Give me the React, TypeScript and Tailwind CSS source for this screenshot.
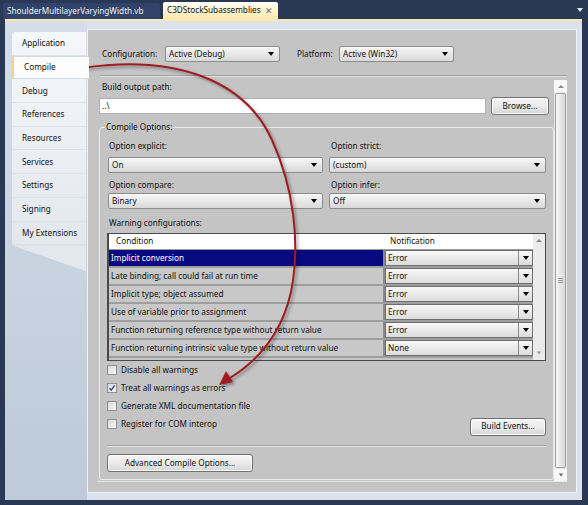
import React from 'react';

const Tri: React.FC<{ className?: string }> = ({ className = 'border-t-black' }) => (
  <span className={`inline-block w-0 h-0 border-x-[3.5px] border-t-[4px] border-x-transparent ${className}`} />
);

const UpTri: React.FC = () => (
  <span className="inline-block w-0 h-0 border-x-[3px] border-b-[3px] border-x-transparent border-b-[#8a8a8a]" />
);

const Combo: React.FC<{ value: string; className?: string }> = ({ value, className = '' }) => (
  <div
    className={`h-[16px] flex items-center rounded-[2px] border border-[#8c8c8c] bg-gradient-to-b from-[#f7f7f7] to-[#d9d9d9] pl-[3px] pr-[5px] ${className}`}
  >
    <span className="flex-1 truncate leading-[14px]">{value}</span>
    <Tri />
  </div>
);

const Btn: React.FC<{ label: string; className?: string }> = ({ label, className = '' }) => (
  <div
    className={`h-[18px] flex items-center justify-center rounded-[3px] border border-[#707070] bg-gradient-to-b from-[#f5f5f5] via-[#ebebeb] to-[#d6d6d6] shadow-[inset_0_0_0_1px_#fbfbfb] ${className}`}
  >
    {label}
  </div>
);

const Check: React.FC<{ label: string; checked?: boolean }> = ({ label, checked }) => (
  <div className="h-[18px] flex items-center">
    <span className="w-[10px] h-[10px] border border-[#8f8f8f] bg-gradient-to-br from-[#d8d8d8] to-[#f7f7f7] flex items-center justify-center">
      {checked && (
        <svg width="8" height="8" viewBox="0 0 8 8">
          <path d="M1.5 4.2 L3.2 6.2 L6.6 1.4" stroke="#2a3f8f" strokeWidth="1.3" fill="none" />
        </svg>
      )}
    </span>
    <span className="ml-[4px]">{label}</span>
  </div>
);

const pages = [
  'Application',
  'Compile',
  'Debug',
  'References',
  'Resources',
  'Services',
  'Settings',
  'Signing',
  'My Extensions',
];

const warnings: [string, string][] = [
  ['Implicit conversion', 'Error'],
  ['Late binding; call could fail at run time', 'Error'],
  ['Implicit type; object assumed', 'Error'],
  ['Use of variable prior to assignment', 'Error'],
  ['Function returning reference type without return value', 'Error'],
  ['Function returning intrinsic value type without return value', 'None'],
];

export default function App() {
  return (
    <div className="relative w-[588px] h-[505px] overflow-hidden bg-[#293955] flex flex-col font-['Noto_Sans',sans-serif] text-[8.2px] leading-none text-[#111]">
      {/* document tabs */}
      <div className="h-[19px] shrink-0 flex items-end pl-[3px]">
        <div className="h-[16px] w-[157px] pl-[4px] flex items-center bg-[#31436a] text-[#eef2f8] rounded-t-[2px]">
          ShoulderMultilayerVaryingWidth.vb
        </div>
        <div className="ml-[3px] h-[17px] w-[115px] pl-[4px] pr-[5px] flex items-center justify-between rounded-t-[2px] bg-gradient-to-b from-[#fffef6] to-[#fde9ad]">
          <span>C3DStockSubassemblies</span>
          <span className="text-[#6a6a6a] text-[9px]">✕</span>
        </div>
        <div className="flex-1" />
        <span className="mr-[5px] mb-[6px]">
          <Tri className="border-t-[#dfe6f0]" />
        </span>
      </div>

      {/* document window */}
      <div className="flex-1 ml-[5px] mr-[6px] mb-[5px] border-t-2 border-[#fde9ad] bg-[#dce2eb] flex pr-[6px]">
        {/* side tabs */}
        <div className="w-[82px] shrink-0 pt-[11px] pl-[7px] bg-gradient-to-b from-[#d5dde8] to-[#bccad9]">
          <div className="w-[74px] rounded-tl-[3px] bg-gradient-to-b from-[#f5f7fa] to-[#e3e8ee] flex flex-col">
            {pages.map((p) =>
              p === 'Compile' ? (
                <div
                  key={p}
                  className="relative z-10 h-[23.7px] w-[77px] pl-[10px] flex items-center bg-[#fcfcfd] border-y border-[#d3d9e1] border-l-2 border-l-[#f1d48c]"
                >
                  {p}
                </div>
              ) : (
                <div key={p} className="h-[23.7px] pl-[10px] flex items-center border-b border-[#dde2e9]">
                  {p}
                </div>
              )
            )}
          </div>
          <div className="w-[74px] h-[26px] bg-[#e3e8ee] [clip-path:polygon(0_0,100%_0,100%_100%)]" />
        </div>

        {/* property page */}
        <div className="flex-1 mt-[8px] mb-[7px] bg-[#c4c4c4] border border-[#eef1f5] px-[9px] flex flex-col">
          <div className="mt-[16px] h-[16px] pl-[5px] flex items-center">
            <span className="w-[63px]">Configuration:</span>
            <Combo value="Active (Debug)" className="w-[115px]" />
            <span className="w-[17px]" />
            <span className="w-[42px]">Platform:</span>
            <Combo value="Active (Win32)" className="w-[115px]" />
          </div>
          <div className="mt-[13px] ml-[3px] h-[2px] border-t border-[#a0a0a0] border-b border-b-[#e2e2e2]" />

          {/* scroll viewport */}
          <div className="mt-[3px] h-[402px] flex border-b border-[#e6e6e6]">
            <div className="flex-1 flex flex-col">
              <div className="mt-[1px] h-[12px] pl-[5px] flex items-center">Build output path:</div>
              <div className="mt-[4px] h-[18px] pl-[2px] flex items-center">
                <div className="w-[387px] h-[16px] pl-[2px] flex items-center bg-white border border-[#b0b0b0]">..\</div>
                <Btn label="Browse..." className="ml-[5px] w-[58px]" />
              </div>

              <fieldset className="mt-[6px] ml-[2px] w-[452px] border border-[#ececec] rounded-[3px] px-[7px] pb-[7px]">
                <legend className="ml-[-2px] px-[1px] h-[12px] leading-[12px]">Compile Options:</legend>

                <div className="mt-[7px] flex">
                  <div className="w-[216px] pl-[2px] h-[12px] flex items-center">Option explicit:</div>
                  <div className="ml-[6px] pl-[2px] h-[12px] flex items-center">Option strict:</div>
                </div>
                <div className="mt-[5px] pl-[1px] flex gap-[6px]">
                  <Combo value="On" className="w-[215px]" />
                  <Combo value="(custom)" className="w-[217px]" />
                </div>
                <div className="mt-[6px] flex">
                  <div className="w-[216px] pl-[2px] h-[12px] flex items-center">Option compare:</div>
                  <div className="ml-[6px] pl-[2px] h-[12px] flex items-center">Option infer:</div>
                </div>
                <div className="mt-[2px] pl-[1px] flex gap-[6px]">
                  <Combo value="Binary" className="w-[215px]" />
                  <Combo value="Off" className="w-[217px]" />
                </div>
                <div className="mt-[8px] pl-[2px] h-[12px] flex items-center">Warning configurations:</div>

                {/* warnings grid */}
                <div className="mt-[4px] w-[439px] h-[128px] border border-[#4a4a4a] border-l-2 flex bg-[#c6c6c6]">
                  <div className="flex-1 flex flex-col">
                    <div className="h-[16px] flex items-center bg-white border-b border-[#9a9a9a]">
                      <span className="w-[276px] pl-[7px]">Condition</span>
                      <span className="pl-[5px]">Notification</span>
                    </div>
                    {warnings.map(([cond, note], i) => (
                      <div key={cond} className="h-[18px] flex border-b-2 border-[#9e9e9e]">
                        <div
                          className={`w-[276px] pl-[2px] flex items-center border-r-2 border-[#8a8a8a] ${
                            i === 0 ? 'bg-[#0a0a80] text-white' : 'bg-[#c8c8c8]'
                          }`}
                        >
                          {cond}
                        </div>
                        <div className="flex-1 flex border border-[#6e6e6e] bg-gradient-to-b from-[#f8f8f8] to-[#dcdcdc]">
                          <span className="flex-1 pl-[2px] flex items-center">{note}</span>
                          <span className="w-[14px] flex items-center justify-center border-l border-[#8a8a8a]">
                            <Tri />
                          </span>
                        </div>
                      </div>
                    ))}
                  </div>
                  <div className="w-[12px] bg-[#ebebeb] flex flex-col items-center justify-between py-[5px]">
                    <UpTri />
                    <Tri className="border-t-[#9a9a9a] scale-75" />
                  </div>
                </div>

                <Check label="Disable all warnings" />
                <Check label="Treat all warnings as errors" checked />
                <Check label="Generate XML documentation file" />
                <div className="h-[18px] flex items-center justify-between">
                  <Check label="Register for COM interop" />
                  <Btn label="Build Events..." className="mt-[5px] w-[76px]" />
                </div>
                <div className="mt-[12px] h-[2px] border-t border-[#a3a3a3] border-b border-b-[#e4e4e4]" />
                <Btn label="Advanced Compile Options..." className="mt-[7px] w-[146px]" />
              </fieldset>
            </div>

            {/* vertical scrollbar */}
            <div className="w-[13px] bg-[#e6e6e6] flex flex-col">
              <div className="h-[12px] bg-[#f8f8f8] flex items-center justify-center">
                <UpTri />
              </div>
              <div className="flex-1 my-[1px] mx-[1px] rounded-[2px] border border-[#a0a0a0] bg-gradient-to-r from-[#f7f7f7] to-[#d9d9d9] flex flex-col items-center justify-center gap-[1px]">
                <span className="w-[5px] h-px bg-[#9a9a9a]" />
                <span className="w-[5px] h-px bg-[#9a9a9a]" />
                <span className="w-[5px] h-px bg-[#9a9a9a]" />
              </div>
              <div className="h-[12px] bg-[#f8f8f8] flex items-center justify-center">
                <Tri className="border-t-[#6a6a6a] scale-75" />
              </div>
            </div>
          </div>
        </div>
      </div>

      {/* annotation arrow */}
      <svg className="absolute inset-0 pointer-events-none" width="588" height="505" viewBox="0 0 588 505">
        <g style={{ filter: 'drop-shadow(2px 2px 1.5px rgba(0,0,0,0.35))' }}>
          <path
            d="M82 68 C175 54 245 80 272 140 C293 186 301 242 291 292 C282 332 259 360 230 378"
            stroke="#a01c22"
            strokeWidth="2"
            fill="none"
          />
          <polygon points="219,385 233,382 226,371" fill="#a01c22" />
        </g>
      </svg>
    </div>
  );
}
